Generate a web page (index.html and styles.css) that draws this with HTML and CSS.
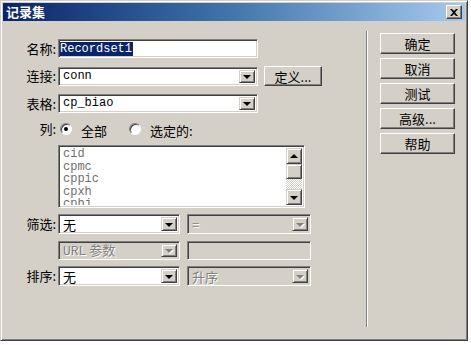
FILE: index.html
```html
<!DOCTYPE html>
<html lang="zh-CN">
<head>
    <meta charset="UTF-8" />
    <title>记录集</title>
    <link rel="stylesheet" href="styles.css">
</head>
<body>
    <div class="dialog">
        <div class="titlebar">
            <span class="title">记录集</span>
            <span class="close">
                <svg width="8" height="7" viewBox="0 0 8 7"><path d="M0 0h2l2 2 2-2h2L5 3.5 8 7H6L4 5 2 7H0l3-3.5z" fill="#000"/></svg>
            </span>
        </div>
        <div class="content">
            <div class="form">
                <div class="row r-name">
                    <span class="label">名称:</span>
                    <div class="field w-wide"><span class="sel-text">Recordset1</span></div>
                </div>
                <div class="row r-conn">
                    <span class="label">连接:</span>
                    <div class="field combo w-wide"><span class="val mono">conn</span><span class="arrow"><i></i></span></div>
                    <button class="btn btn-define">定义...</button>
                </div>
                <div class="row r-table">
                    <span class="label">表格:</span>
                    <div class="field combo w-wide"><span class="val mono">cp_biao</span><span class="arrow"><i></i></span></div>
                </div>
                <div class="row r-radio">
                    <span class="label">列:</span>
                    <span class="radio checked"></span><span class="radio-text">全部</span>
                    <span class="radio second"></span><span class="radio-text">选定的:</span>
                </div>
                <div class="row r-list">
                    <span class="label"></span>
                    <div class="field listbox">
                        <ul class="items mono">
                            <li>cid</li>
                            <li>cpmc</li>
                            <li>cppic</li>
                            <li>cpxh</li>
                            <li>cpbj</li>
                        </ul>
                        <div class="scrollbar">
                            <span class="sb-btn"><i class="up"></i></span>
                            <span class="sb-thumb"></span>
                            <span class="sb-track"></span>
                            <span class="sb-btn"><i></i></span>
                        </div>
                    </div>
                </div>
                <div class="row r-filter">
                    <span class="label">筛选:</span>
                    <div class="field combo w-half"><span class="val">无</span><span class="arrow"><i></i></span></div>
                    <div class="field combo w-half2 disabled"><span class="val">=</span><span class="arrow"><i></i></span></div>
                </div>
                <div class="row r-url">
                    <span class="label"></span>
                    <div class="field combo w-half disabled"><span class="val"><span class="mono">URL</span> 参数</span><span class="arrow"><i></i></span></div>
                    <div class="field w-half2 disabled"></div>
                </div>
                <div class="row r-sort">
                    <span class="label">排序:</span>
                    <div class="field combo w-half"><span class="val">无</span><span class="arrow"><i></i></span></div>
                    <div class="field combo w-half2 disabled"><span class="val">升序</span><span class="arrow"><i></i></span></div>
                </div>
            </div>
            <div class="separator"></div>
            <div class="buttons">
                <button class="btn">确定</button>
                <button class="btn">取消</button>
                <button class="btn">测试</button>
                <button class="btn">高级...</button>
                <button class="btn">帮助</button>
            </div>
        </div>
    </div>
</body>
</html>
```

FILE: styles.css
```css
/* Win2000 style dialog */
body {
    margin: 0;
    background: #fff;
    font-family: 'Noto Sans CJK SC', sans-serif;
    font-size: 12px;
    color: #000;
}
.dialog {
    width: 462px;
    height: 335px;
    background: #d4d0c8;
    border: 1px solid;
    border-color: #d4d0c8 #404040 #404040 #d4d0c8;
    box-shadow: inset 1px 1px #fff, inset -1px -1px #808080;
    padding: 2px;
}
.titlebar {
    height: 18px;
    background: linear-gradient(90deg, #0a246a 0%, #3a6ea5 45%, #a6caf0 100%);
    display: flex;
    align-items: center;
    justify-content: space-between;
    padding: 0 3px;
}
.title {
    color: #fff;
    font-weight: 700;
    font-size: 13px;
    line-height: 18px;
}
.close {
    width: 14px;
    height: 12px;
    background: #d4d0c8;
    border: 1px solid;
    border-color: #fff #404040 #404040 #fff;
    box-shadow: inset -1px -1px #808080;
    display: flex;
    align-items: center;
    justify-content: center;
}
.content {
    display: flex;
    height: 317px;
}
.form {
    width: 362px;
    padding-top: 18px;
}
.row {
    display: flex;
    align-items: center;
}
.label {
    width: 55px;
    flex: none;
    text-align: right;
    padding-right: 2px;
    box-sizing: border-box;
    line-height: 16px;
    font-size: 13px;
}
.r-conn, .r-table { margin-top: 8px; }
.r-radio { margin-top: 9px; height: 14px; }
.r-list { margin-top: 9px; }
.r-filter { margin-top: 6px; }
.r-url { margin-top: 7px; }
.r-sort { margin-top: 6px; }
.mono {
    font-family: 'Liberation Mono', 'Noto Sans CJK SC', monospace;
}
.field {
    height: 19px;
    background: #fff;
    border: 1px solid;
    border-color: #808080 #fff #fff #808080;
    box-shadow: inset 1px 1px #404040, inset -1px -1px #d4d0c8;
    box-sizing: border-box;
    display: flex;
    align-items: center;
    padding: 2px;
}
.w-wide { width: 200px; }
.w-half { width: 122px; height: 20px; }
.w-half2 { width: 124px; height: 20px; margin-left: 7px; }
.r-url .field { height: 19px; }
.field.disabled {
    background: #d4d0c8;
    color: #808080;
}
.sel-text {
    font-family: 'Liberation Mono', monospace;
    background: #0a246a;
    color: #fff;
    line-height: 14px;
    padding-right: 1px;
    margin-left: -1px;
}
.combo .val {
    flex: 1;
    padding-left: 2px;
    line-height: 15px;
    white-space: nowrap;
}
.r-filter .val, .r-sort .val, .r-url .val {
    font-size: 13px;
}
.disabled .val {
    text-shadow: 1px 1px #fff;
}
.arrow {
    width: 16px;
    height: 100%;
    flex: none;
    background: #d4d0c8;
    border: 1px solid;
    border-color: #d4d0c8 #404040 #404040 #d4d0c8;
    box-shadow: inset 1px 1px #fff, inset -1px -1px #808080;
    box-sizing: border-box;
    display: flex;
    align-items: center;
    justify-content: center;
}
.arrow i, .sb-btn i {
    width: 0;
    height: 0;
    border-left: 4px solid transparent;
    border-right: 4px solid transparent;
    border-top: 4px solid #000;
    margin-top: 1px;
}
.disabled .arrow i {
    border-top-color: #808080;
    filter: drop-shadow(1px 1px 0 #fff);
}
.sb-btn i.up {
    border-top: none;
    border-bottom: 4px solid #000;
    margin-top: -1px;
}
.btn {
    width: 75px;
    height: 21px;
    background: #d4d0c8;
    border: 1px solid;
    border-color: #fff #404040 #404040 #fff;
    box-shadow: inset -1px -1px #808080;
    font-family: 'Noto Sans CJK SC', sans-serif;
    font-size: 13px;
    line-height: 17px;
    padding: 0;
    color: #000;
}
.btn-define {
    width: 58px;
    height: 20px;
    margin-left: 6px;
}
.radio {
    width: 12px;
    height: 12px;
    border-radius: 50%;
    background: #fff;
    box-sizing: border-box;
    border: 1px solid;
    border-color: #808080 #fff #fff #808080;
    box-shadow: inset 1px 1px #404040;
    margin-left: 2px;
    position: relative;
}
.radio.checked::after {
    content: '';
    position: absolute;
    left: 3px;
    top: 3px;
    width: 4px;
    height: 4px;
    border-radius: 50%;
    background: #000;
}
.radio.second { margin-left: 22px; }
.radio-text {
    margin-left: 9px;
    font-size: 13px;
    line-height: 16px;
    padding-top: 4px;
}
.listbox {
    width: 247px;
    height: 63px;
    padding: 2px;
    align-items: stretch;
}
.items {
    list-style: none;
    margin: 0;
    padding: 0 0 0 2px;
    flex: 1;
    color: #707070;
    line-height: 12.5px;
    overflow: hidden;
}
.scrollbar {
    width: 16px;
    display: flex;
    flex-direction: column;
}
.sb-btn, .sb-thumb {
    height: 16px;
    flex: none;
    background: #d4d0c8;
    border: 1px solid;
    border-color: #d4d0c8 #404040 #404040 #d4d0c8;
    box-shadow: inset 1px 1px #fff, inset -1px -1px #808080;
    box-sizing: border-box;
    display: flex;
    align-items: center;
    justify-content: center;
}
.sb-thumb { height: 15px; }
.sb-track {
    flex: 1;
    background: repeating-conic-gradient(#fff 0 25%, #d4d0c8 0 50%) 0 0 / 2px 2px;
}
.separator {
    width: 1px;
    height: 296px;
    margin-top: 10px;
    margin-left: 1px;
    background: #808080;
    border-right: 1px solid #fff;
}
.buttons {
    display: flex;
    flex-direction: column;
    gap: 4px;
    padding-top: 12px;
    margin-left: 12px;
}
```
